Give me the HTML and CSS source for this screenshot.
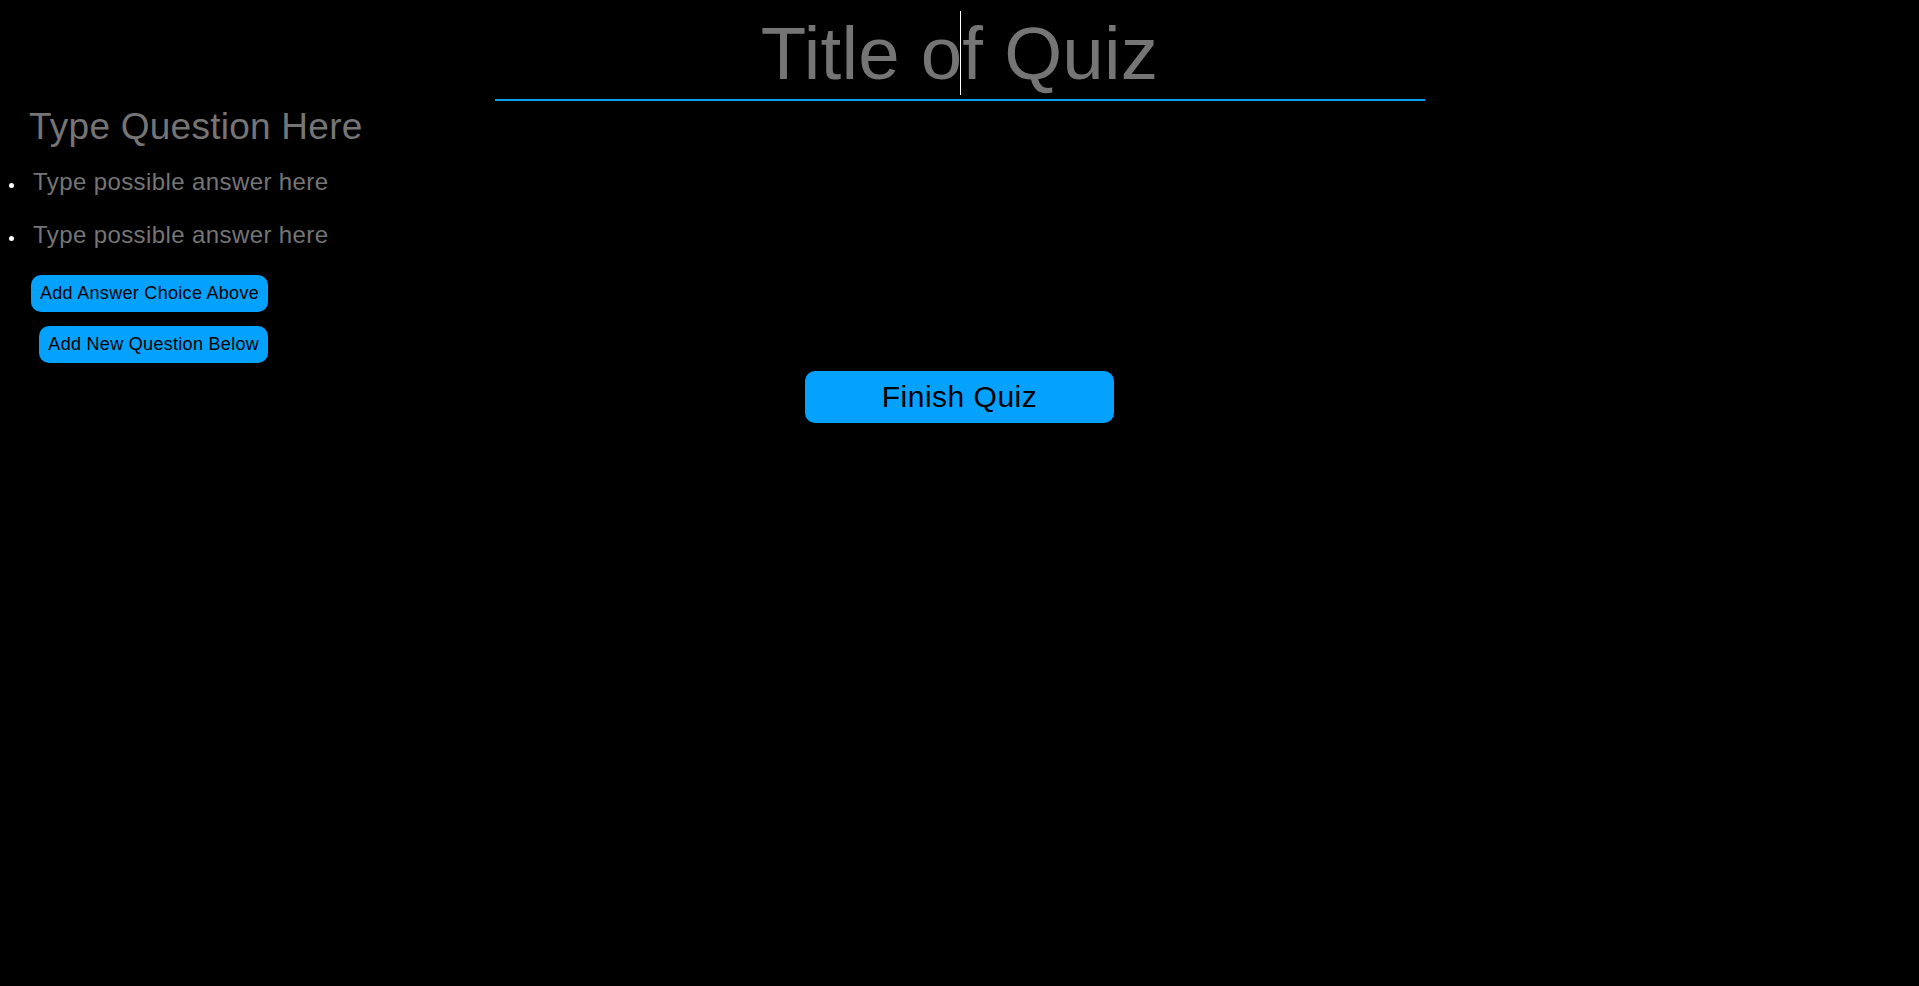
FILE: index.html
```html
<!DOCTYPE html>
<html lang="en">
<head>
<meta charset="utf-8">
<title>Quiz Builder</title>
<link rel="stylesheet" href="styles.css">
</head>
<body>
<header class="title-wrap">
  <input class="title-input" type="text" placeholder="Title of Quiz">
  <span class="caret"></span>
</header>
<main class="quiz">
  <section class="question">
    <input class="question-input" type="text" placeholder="Type Question Here">
    <ul class="answers">
      <li class="answer"><span class="bullet"></span><input class="answer-input" type="text" placeholder="Type possible answer here"></li>
      <li class="answer"><span class="bullet"></span><input class="answer-input" type="text" placeholder="Type possible answer here"></li>
    </ul>
    <div class="question-actions">
      <button class="btn btn-small">Add Answer Choice Above</button>
      <button class="btn btn-small">Add New Question Below</button>
    </div>
  </section>
  <div class="finish-row">
    <button class="btn btn-finish">Finish Quiz</button>
  </div>
</main>
</body>
</html>
```

FILE: styles.css
```css
html, body {
  margin: 0;
  padding: 0;
  background: #000;
  height: 100%;
}

body {
  font-family: "Liberation Sans", Arial, sans-serif;
  color: #fff;
}

input {
  font-family: "Liberation Sans", Arial, sans-serif;
  background: transparent;
  border: none;
  outline: none;
  color: #ddd;
  padding: 0;
  margin: 0;
  caret-color: transparent;
}

input::placeholder {
  color: #757575;
  opacity: 1;
}

.title-wrap {
  position: relative;
  width: 930px;
  margin: 0 auto;
  padding-top: 11px;
}

.title-input {
  display: block;
  width: 100%;
  font-size: 74.5px;
  letter-spacing: 0.2px;
  line-height: 85px;
  height: 85px;
  text-align: center;
  padding-bottom: 3px;
  border-bottom: 2px solid #0a9ff2;
  box-sizing: content-box;
}

.caret {
  position: absolute;
  left: 50%;
  top: 11px;
  width: 1px;
  height: 84px;
  background: #fff;
}

.question {
  display: flex;
  flex-direction: column;
  padding-top: 4px;
}

.question-input {
  font-size: 37px;
  letter-spacing: 0.25px;
  line-height: 43px;
  height: 43px;
  margin-left: 29px;
  width: 600px;
}

.answers {
  list-style: none;
  margin: 20px 0 0 0;
  padding: 0;
  display: flex;
  flex-direction: column;
  gap: 25px;
}

.answer {
  display: flex;
  align-items: center;
  height: 28px;
}

.bullet {
  width: 5px;
  height: 5px;
  border-radius: 50%;
  background: #fff;
  margin-left: 9px;
  margin-right: 19px;
  position: relative;
  top: 3px;
}

.answer-input {
  font-size: 24px;
  letter-spacing: 0.4px;
  line-height: 28px;
  height: 28px;
  width: 500px;
}

.question-actions {
  display: inline-flex;
  flex-direction: column;
  align-items: flex-end;
  align-self: flex-start;
  gap: 14px;
  margin: 26px 0 0 31px;
}

.btn {
  font-family: "Liberation Sans", Arial, sans-serif;
  background: #04a2fd;
  color: #000;
  border: none;
  cursor: pointer;
}

.btn-small {
  font-size: 18px;
  letter-spacing: 0.3px;
  line-height: 21px;
  padding: 8px 9px;
  border-radius: 10px;
}

.finish-row {
  display: flex;
  justify-content: center;
  margin-top: 8px;
}

.btn-finish {
  width: 309px;
  font-size: 30px;
  letter-spacing: 0.5px;
  line-height: 34px;
  padding: 9px 0;
  border-radius: 10px;
}
```
